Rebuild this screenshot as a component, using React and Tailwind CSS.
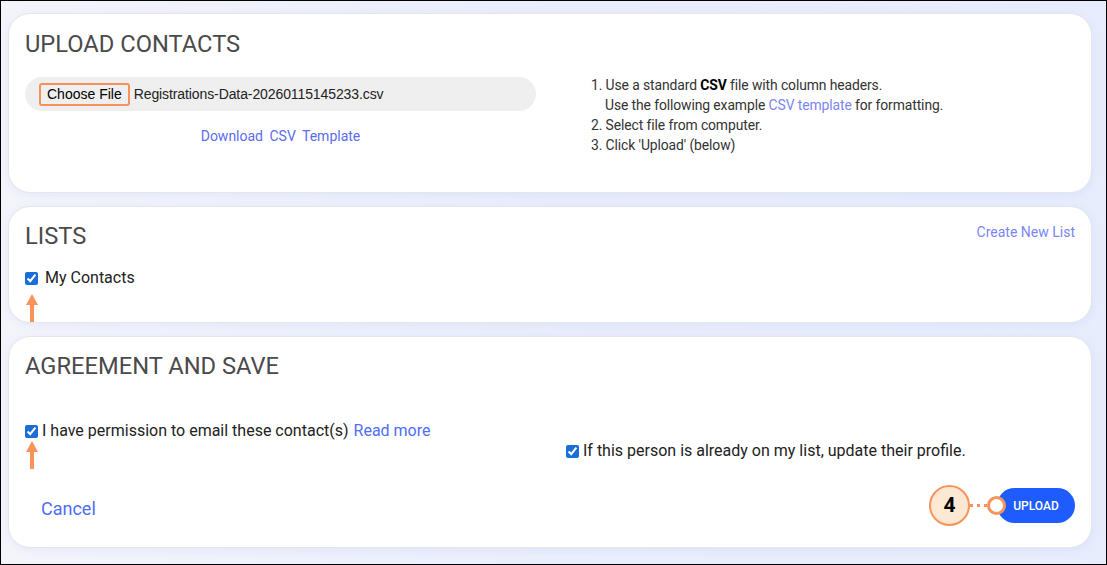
import React from 'react';

const ARROW = (
  <svg width="12" height="28" viewBox="0 0 12 28" className="block">
    <path d="M6 0 L12 11 L8 11 L8 28 L4 28 L4 11 L0 11 Z" fill="#f8935a" />
  </svg>
);

function Card({ className = '', children }) {
  return (
    <div className={`bg-white rounded-[22px] border border-[#e6e6ea] shadow-[0_2px_10px_rgba(120,140,230,0.12)] ${className}`}>
      {children}
    </div>
  );
}

function Check({ className = '' }) {
  return (
    <input
      type="checkbox"
      checked
      readOnly
      className={`w-[13px] h-[13px] m-0 accent-[#1a6ed8] shrink-0 ${className}`}
    />
  );
}

export default function App() {
  return (
    <div
      className="w-[1107px] h-[565px] border border-black bg-gradient-to-r from-[#f4f5fb] via-[#eaeefc] to-[#e8edfd] overflow-hidden"
      style={{ fontFamily: 'Roboto, "Liberation Sans", Arial, sans-serif' }}
    >
      <div className="pl-[7px] pr-[14px] pt-[12px] flex flex-col gap-[13px]">
        {/* Upload contacts */}
        <Card className="h-[180px] px-[16px] pt-[16px]">
          <h2 className="text-[23.7px] leading-[28px] text-[#4a4a4a]">UPLOAD CONTACTS</h2>
          <div className="flex mt-[19px]">
            <div className="w-[511px]">
              <div
                className="h-[34px] rounded-full bg-[#efefef] flex items-center pl-[14px] text-[14px] text-[#222]"
                style={{ fontFamily: '"Liberation Sans", Arial, sans-serif' }}
              >
                <span className="h-[23px] px-[6px] flex items-center bg-[#efefef] border-2 border-[#f5925c] rounded-[3px] text-black">
                  Choose File
                </span>
                <span className="ml-[4px] tracking-[-0.1px]">Registrations-Data-20260115145233.csv</span>
              </div>
              <div className="text-center mt-[15px] text-[14px] text-[#5b6cf2] [word-spacing:3px]">
                Download CSV Template
              </div>
            </div>
            <div className="ml-[55px] text-[13.9px] leading-[20px] text-[#333] -mt-[2px] tracking-[-0.1px]">
              <div>1. Use a standard <b className="text-black">CSV</b> file with column headers.</div>
              <div className="pl-[14px]">Use the following example <span className="text-[#7b86f5]">CSV template</span> for formatting.</div>
              <div>2. Select file from computer.</div>
              <div>3. Click 'Upload' (below)</div>
            </div>
          </div>
        </Card>

        {/* Lists */}
        <Card className="h-[117px] px-[16px] pt-[15px] relative">
          <div className="flex items-start justify-between">
            <h2 className="text-[23.7px] leading-[28px] text-[#4a4a4a]">LISTS</h2>
            <span className="text-[14px] text-[#7b86f5]">Create New List</span>
          </div>
          <label className="flex items-center mt-[16px] text-[16px] text-[#222]">
            <Check />
            <span className="ml-[7px]">My Contacts</span>
          </label>
          <div className="ml-[1px] mt-[4px]">{ARROW}</div>
        </Card>

        {/* Agreement */}
        <Card className="h-[212px] px-[16px] pt-[15px] relative">
          <h2 className="text-[23.7px] leading-[28px] text-[#4a4a4a]">AGREEMENT AND SAVE</h2>
          <div className="flex mt-[39px]">
            <div className="w-[541px]">
              <label className="flex items-center text-[16px] text-[#222]">
                <Check />
                <span className="ml-[4px]">I have permission to email these contact(s)</span>
                <span className="ml-[5px] text-[#4f6ef7]">Read more</span>
              </label>
              <div className="ml-[1px] -mt-[2px]">{ARROW}</div>
            </div>
            <label className="flex items-center text-[16px] text-[#222] mt-[22px] h-[20px]">
              <Check />
              <span className="ml-[4px]">If this person is already on my list, update their profile.</span>
            </label>
          </div>
          <div className="flex items-center justify-between mt-[16px]">
            <span className="ml-[16px] text-[18px] text-[#4f6ef7] mt-[6px]">Cancel</span>
            <div className="flex items-center">
              <div className="w-[41px] h-[41px] rounded-full bg-[#fde9d3] border-[2.5px] border-[#f8935a] flex items-center justify-center text-[21px] font-bold text-black">
                4
              </div>
              <div className="w-[17px] border-t-[3px] border-dotted border-[#f8935a]"></div>
              <div className="relative z-10 w-[19px] h-[19px] rounded-full bg-white border-[3px] border-[#f8935a]"></div>
              <div className="w-[78px] h-[35px] -ml-[9px] rounded-full bg-[#1f5cff] text-white text-[12px] font-medium flex items-center justify-center">
                UPLOAD
              </div>
            </div>
          </div>
        </Card>
      </div>
    </div>
  );
}
